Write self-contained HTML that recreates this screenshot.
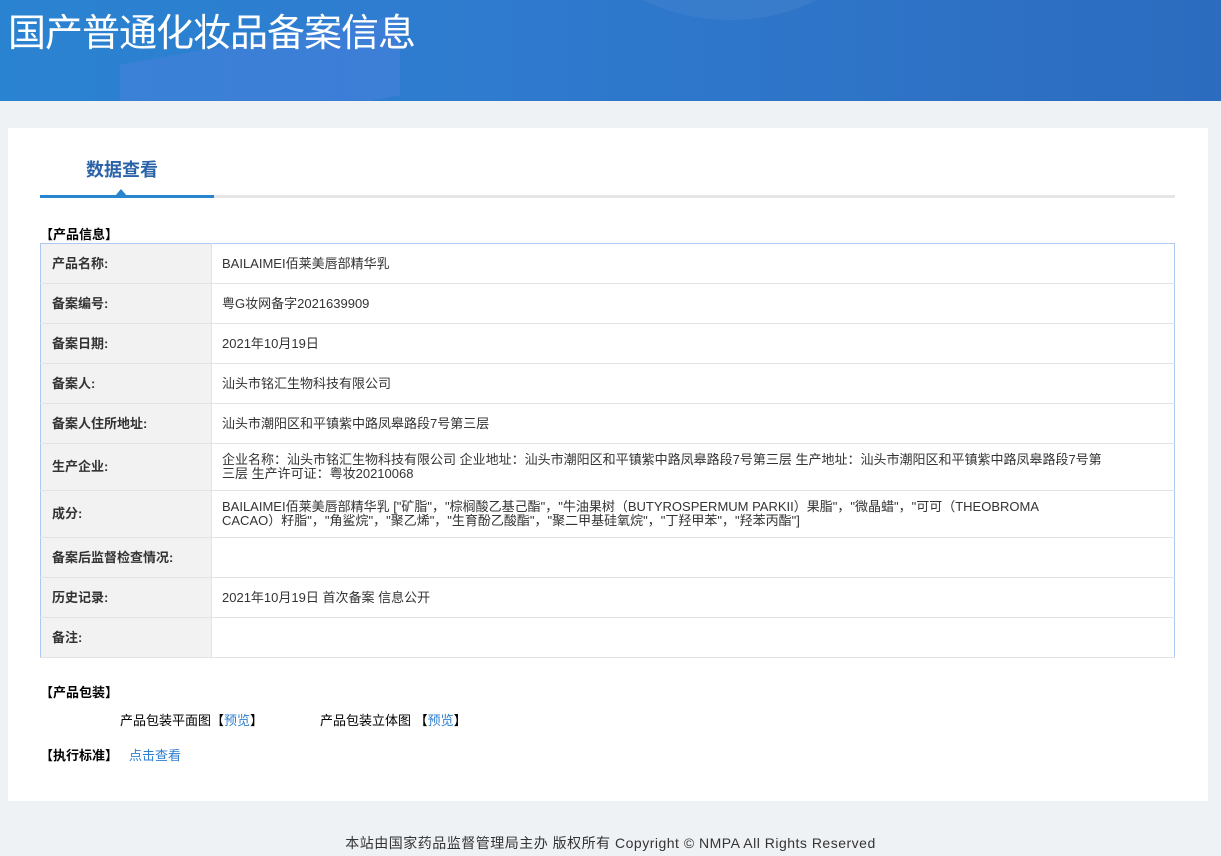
<!DOCTYPE html>
<html><head><meta charset="utf-8"><style>
*{margin:0;padding:0;box-sizing:border-box}
body{width:1221px;height:856px;background:#eff2f5;font-family:"Liberation Sans","Noto Sans CJK SC",sans-serif;color:#333;font-size:13px;position:relative;overflow:hidden}
.hd{position:absolute;left:0;top:0;width:1221px;height:101px;background:linear-gradient(90deg,#2a83d1 0%,#2f7bcf 40%,#2c6cbf 100%);overflow:hidden}
.hd h1{position:absolute;left:8px;top:2px;font-size:38px;font-weight:normal;color:#fff;letter-spacing:-1px;font-family:"Noto Sans CJK SC",sans-serif}
.c1{position:absolute;left:120px;top:40px;width:280px;height:80px;background:rgba(90,130,230,.35);transform:skewY(-10deg)}
.c2{position:absolute;left:580px;top:-200px;width:300px;height:220px;border-radius:50%;background:rgba(255,255,255,.05)}
.box{position:absolute;left:8px;top:128px;width:1200px;height:673px;background:#fff}
.tab{position:absolute;left:86px;top:156px;font-size:18px;font-weight:bold;color:#2a63a8}
.ln{position:absolute;left:40px;top:195px;width:1135px;height:3px;background:#e6e6e6}
.ln2{position:absolute;left:40px;top:195px;width:174px;height:3px;background:#2a85d0}
.tri{position:absolute;left:115px;top:189px;border-left:6px solid transparent;border-right:6px solid transparent;border-bottom:7px solid #2a85d0}
.sec{position:absolute;font-weight:bold;color:#000;font-size:13px}
table{position:absolute;left:40px;top:243px;width:1135px;border-collapse:collapse;border:1px solid #a9c9ef}
td{border-bottom:1px solid #e3e3e3;height:40px;padding:0 10px;vertical-align:middle;line-height:14px}
td.l{width:171px;background:#f2f2f2;font-weight:bold;border-right:1px solid #e3e3e3;padding-left:11px}
tr.t td{height:47px}
a{color:#2d7fd0;text-decoration:none}
.ft{position:absolute;top:833px;left:0;width:1221px;text-align:center;font-size:14px;color:#333;letter-spacing:0.5px}
</style></head><body>
<div class="hd"><div class="c1"></div><div class="c2"></div><h1>国产普通化妆品备案信息</h1></div>
<div class="box"></div>
<div class="tab">数据查看</div>
<div class="ln"></div><div class="ln2"></div><div class="tri"></div>
<div class="sec" style="left:40px;top:224px">【产品信息】</div>
<table>
<tr><td class="l">产品名称:</td><td>BAILAIMEI佰莱美唇部精华乳</td></tr>
<tr><td class="l">备案编号:</td><td>粤G妆网备字2021639909</td></tr>
<tr><td class="l">备案日期:</td><td>2021年10月19日</td></tr>
<tr><td class="l">备案人:</td><td>汕头市铭汇生物科技有限公司</td></tr>
<tr><td class="l">备案人住所地址:</td><td>汕头市潮阳区和平镇紫中路凤皋路段7号第三层</td></tr>
<tr class="t"><td class="l">生产企业:</td><td>企业名称：汕头市铭汇生物科技有限公司 企业地址：汕头市潮阳区和平镇紫中路凤皋路段7号第三层 生产地址：汕头市潮阳区和平镇紫中路凤皋路段7号第<br>三层 生产许可证：粤妆20210068</td></tr>
<tr class="t"><td class="l">成分:</td><td>BAILAIMEI佰莱美唇部精华乳 ["矿脂"，"棕榈酸乙基己酯"，"牛油果树（BUTYROSPERMUM PARKII）果脂"，"微晶蜡"，"可可（THEOBROMA<br>CACAO）籽脂"，"角鲨烷"，"聚乙烯"，"生育酚乙酸酯"，"聚二甲基硅氧烷"，"丁羟甲苯"，"羟苯丙酯"]</td></tr>
<tr><td class="l">备案后监督检查情况:</td><td></td></tr>
<tr><td class="l">历史记录:</td><td>2021年10月19日 首次备案 信息公开</td></tr>
<tr><td class="l">备注:</td><td></td></tr>
</table>
<div class="sec" style="left:40px;top:682px">【产品包装】</div>
<div style="position:absolute;left:120px;top:710px;color:#000">产品包装平面图【<a>预览</a>】</div>
<div style="position:absolute;left:320px;top:710px;color:#000">产品包装立体图 【<a>预览</a>】</div>
<div class="sec" style="left:40px;top:745px">【执行标准】</div>
<div style="position:absolute;left:129px;top:745px"><a>点击查看</a></div>
<div class="ft">本站由国家药品监督管理局主办 版权所有 Copyright © NMPA All Rights Reserved</div>
</body></html>
